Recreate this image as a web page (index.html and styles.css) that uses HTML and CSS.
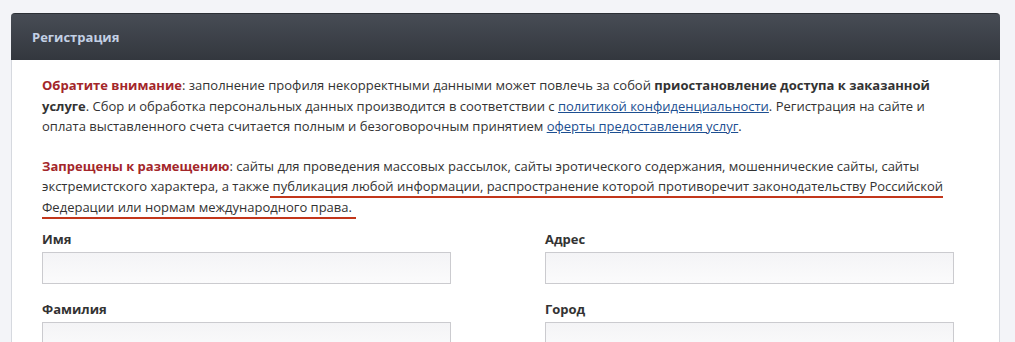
FILE: index.html
```html
<!DOCTYPE html>
<html lang="ru">
<head>
    <meta charset="UTF-8">
    <meta name="viewport" content="width=device-width, initial-scale=1.0">
    <title>Регистрация</title>
    <link rel="stylesheet" href="styles.css">
</head>
<body>

<div class="panel">
    <div class="panel-heading">
        <h3>Регистрация</h3>
    </div>
    <div class="panel-body">
        <p>
            <strong class="warn">Обратите внимание</strong>: заполнение профиля некорректными данными может повлечь за собой <strong>приостановление доступа к заказанной услуге</strong>. Сбор и обработка персональных данных производится в соответствии с <a href="#">политикой конфиденциальности</a>. Регистрация на сайте и оплата выставленного счета считается полным и безоговорочным принятием <a href="#">оферты предоставления услуг</a>.
        </p>
        <p>
            <strong class="warn">Запрещены к размещению</strong>: сайты для проведения массовых рассылок, сайты эротического содержания, мошеннические сайты, сайты экстремистского характера, а также <span class="marked">публикация любой информации, распространение которой противоречит законодательству Российской Федерации или нормам международного права.</span>
        </p>

        <div class="form-grid">
            <div class="form-group">
                <label for="firstname">Имя</label>
                <input type="text" id="firstname" name="firstname">
            </div>
            <div class="form-group">
                <label for="address">Адрес</label>
                <input type="text" id="address" name="address">
            </div>
            <div class="form-group">
                <label for="lastname">Фамилия</label>
                <input type="text" id="lastname" name="lastname">
            </div>
            <div class="form-group">
                <label for="city">Город</label>
                <input type="text" id="city" name="city">
            </div>
        </div>
    </div>
</div>

</body>
</html>
```

FILE: styles.css
```css
body {
    font-family: 'Open Sans', sans-serif;
    font-size: 13px;
    color: #333;
    background-color: #f3f4f8;
    margin: 0;
    padding: 13px 15px 0 11px;
}

.panel {
    background-color: #fff;
    border-radius: 4px 4px 0 0;
}

.panel-heading {
    background: linear-gradient(to bottom, #474c55, #33373e);
    border-top: 1px solid #2c3036;
    border-radius: 4px 4px 0 0;
    height: 46px;
    padding: 0 21px;
    display: flex;
    align-items: center;
}

.panel-heading h3 {
    margin: 0;
    font-size: 13px;
    font-weight: bold;
    color: #c3d0e4;
}

.panel-body {
    border-left: 1px solid #d6d9df;
    border-right: 1px solid #d6d9df;
    padding: 15px 30px 0 30px;
}

p {
    margin: 0 0 19px;
    line-height: 20.5px;
}

.warn {
    color: #a3262a;
}

a {
    color: #1d4f91;
    text-decoration: underline;
}

.marked {
    border-bottom: 2px solid #c2361b;
    padding: 0 4px 1px 3px;
    margin-left: -3px;
}

.form-grid {
    display: grid;
    grid-template-columns: 409px 409px;
    column-gap: 94px;
    row-gap: 15px;
    margin-top: -7px;
}

.form-group label {
    display: block;
    font-weight: bold;
    line-height: 20px;
    margin-bottom: 3px;
}

input[type="text"] {
    box-sizing: border-box;
    display: block;
    width: 100%;
    height: 32px;
    border: 1px solid #cbcbcf;
    background: linear-gradient(to bottom, #f4f4f6, #fbfbfc);
    margin: 0;
    padding: 4px 8px;
}
```
